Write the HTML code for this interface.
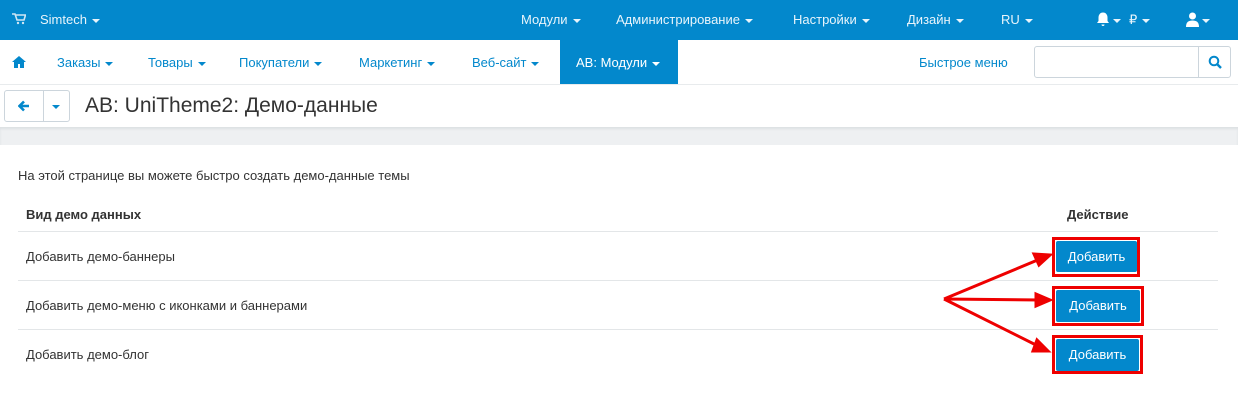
<!DOCTYPE html>
<html><head><meta charset="utf-8"><style>
*{box-sizing:border-box;margin:0;padding:0}
body{width:1238px;height:410px;background:#fff;font-family:"Liberation Sans",sans-serif;position:relative;overflow:hidden;font-size:13px;color:#333}
.a{position:absolute;white-space:nowrap}
.top{position:absolute;left:0;top:0;width:1238px;height:40px;background:#0388cc;color:#fff}
.top .a{top:12px;font-size:13px;color:#e8f4fb}
.car{display:inline-block;border-left:4px solid transparent;border-right:4px solid transparent;border-top:4px solid currentColor;vertical-align:middle;margin-left:5px}
.nav .a{top:55px;color:#0388cc;font-size:13px}
.btn{position:absolute;background:#0388cc;color:#fff;font-size:13px;text-align:center;line-height:31px;border-radius:2px}
.rb{position:absolute;border:3px solid #e00}
</style></head><body>
<div class="top">
<svg class="a" style="left:12px;top:13px" width="14" height="12" viewBox="0 0 14 12"><path d="M0 1h3l2 6h7l1.5-5H4" fill="none" stroke="#cfe6f4" stroke-width="1.6"/><circle cx="6" cy="10" r="1.2" fill="#cfe6f4"/><circle cx="11" cy="10" r="1.2" fill="#cfe6f4"/></svg>
<span class="a" style="left:40px">Simtech<span class="car"></span></span>
<span class="a" style="left:521px">Модули<span class="car"></span></span>
<span class="a" style="left:616px">Администрирование<span class="car"></span></span>
<span class="a" style="left:793px">Настройки<span class="car"></span></span>
<span class="a" style="left:907px">Дизайн<span class="car"></span></span>
<span class="a" style="left:1001px">RU<span class="car"></span></span>
<svg class="a" style="left:1096px;top:12px" width="14" height="15" viewBox="0 0 14 15"><path d="M7 0.5c-3 0-4.5 2.5-4.5 5v3.5L1 11h12l-1.5-2V5.5C11.5 3 10 .5 7 .5z" fill="#fff"/><path d="M5.5 12.5a1.5 1.5 0 0 0 3 0z" fill="#fff"/></svg>
<span class="a" style="left:1113px"><span class="car" style="margin-left:0"></span></span>
<span class="a" style="left:1129px">₽<span class="car"></span></span>
<svg class="a" style="left:1186px;top:12px" width="13" height="15" viewBox="0 0 13 15"><circle cx="6.5" cy="4" r="3.5" fill="#fff"/><path d="M0 15c0-5 2.5-6.5 6.5-6.5S13 10 13 15z" fill="#fff"/></svg>
<span class="a" style="left:1202px"><span class="car" style="margin-left:0"></span></span>
</div>
<div class="nav">
<svg class="a" style="left:12px;top:56px" width="14" height="12" viewBox="0 0 14 12"><path d="M7 0L0 6h2v6h4V8h2v4h4V6h2z" fill="#0388cc"/></svg>
<span class="a" style="left:57px">Заказы<span class="car"></span></span>
<span class="a" style="left:148px">Товары<span class="car"></span></span>
<span class="a" style="left:239px">Покупатели<span class="car"></span></span>
<span class="a" style="left:359px">Маркетинг<span class="car"></span></span>
<span class="a" style="left:472px">Веб-сайт<span class="car"></span></span>
<div class="a" style="left:560px;top:40px;width:118px;height:44px;background:#0388cc"></div>
<span class="a" style="left:576px;color:#fff">AB: Модули<span class="car"></span></span>
<span class="a" style="left:919px">Быстрое меню</span>
</div>
<div class="a" style="left:1034px;top:46px;width:197px;height:32px;border:1px solid #ccd5dc;border-radius:3px"></div>
<div class="a" style="left:1198px;top:46px;width:1px;height:32px;background:#ccd5dc"></div>
<svg class="a" style="left:1208px;top:55px" width="14" height="14" viewBox="0 0 14 14"><circle cx="6" cy="6" r="4.3" fill="none" stroke="#0388cc" stroke-width="2"/><path d="M9 9l4 4" stroke="#0388cc" stroke-width="2.4"/></svg>
<div class="a" style="left:0;top:84px;width:1238px;height:1px;background:#e8ebed"></div>
<div class="a" style="left:4px;top:90px;width:66px;height:32px;border:1px solid #ccd5dc;border-radius:3px"></div>
<div class="a" style="left:43px;top:90px;width:1px;height:32px;background:#ccd5dc"></div>
<svg class="a" style="left:18px;top:100px" width="12" height="12" viewBox="0 0 12 12"><path d="M11 6H2M6 1.5L1.5 6 6 10.5" fill="none" stroke="#0388cc" stroke-width="2.6"/></svg>
<span class="a" style="left:52px;top:98px;color:#0388cc"><span class="car" style="margin-left:0"></span></span>
<span class="a" style="left:85px;top:94px;font-size:21px;color:#333">AB: UniTheme2: Демо-данные</span>
<div class="a" style="left:0;top:127px;width:1238px;height:18px;background:#eef0f2;box-shadow:inset 0 2px 2px #dde0e3"></div>
<span class="a" style="left:18px;top:168px;font-size:13px">На этой странице вы можете быстро создать демо-данные темы</span>
<span class="a" style="left:26px;top:207px;font-weight:bold">Вид демо данных</span>
<span class="a" style="left:1067px;top:207px;font-weight:bold">Действие</span>
<div class="a" style="left:18px;top:231px;width:1200px;height:1px;background:#e3e6e8"></div>
<div class="a" style="left:18px;top:280px;width:1200px;height:1px;background:#e3e6e8"></div>
<div class="a" style="left:18px;top:329px;width:1200px;height:1px;background:#e3e6e8"></div>
<span class="a" style="left:26px;top:249px">Добавить демо-баннеры</span>
<span class="a" style="left:26px;top:298px">Добавить демо-меню с иконками и баннерами</span>
<span class="a" style="left:26px;top:347px">Добавить демо-блог</span>
<div class="rb" style="left:1052px;top:237px;width:88px;height:40px"></div>
<div class="rb" style="left:1052px;top:286px;width:92px;height:40px"></div>
<div class="rb" style="left:1052px;top:335px;width:91px;height:39px"></div>
<div class="btn" style="left:1056px;top:241px;width:81px;height:31px">Добавить</div>
<div class="btn" style="left:1056px;top:290px;width:84px;height:32px">Добавить</div>
<div class="btn" style="left:1056px;top:339px;width:83px;height:32px">Добавить</div>
<svg class="a" style="left:0;top:0" width="1238" height="410">
<g stroke="#e00" stroke-width="3" fill="#e00">
<path d="M944 299L1040 259M944 299L1040 300M944 299L1038 346" fill="none"/>
<path d="M1050 255l-16 -1l5 11z M1050 300l-14 -6v12z M1048 351l-11 -11l-4 11z"/>
</g></svg>
</body></html>
